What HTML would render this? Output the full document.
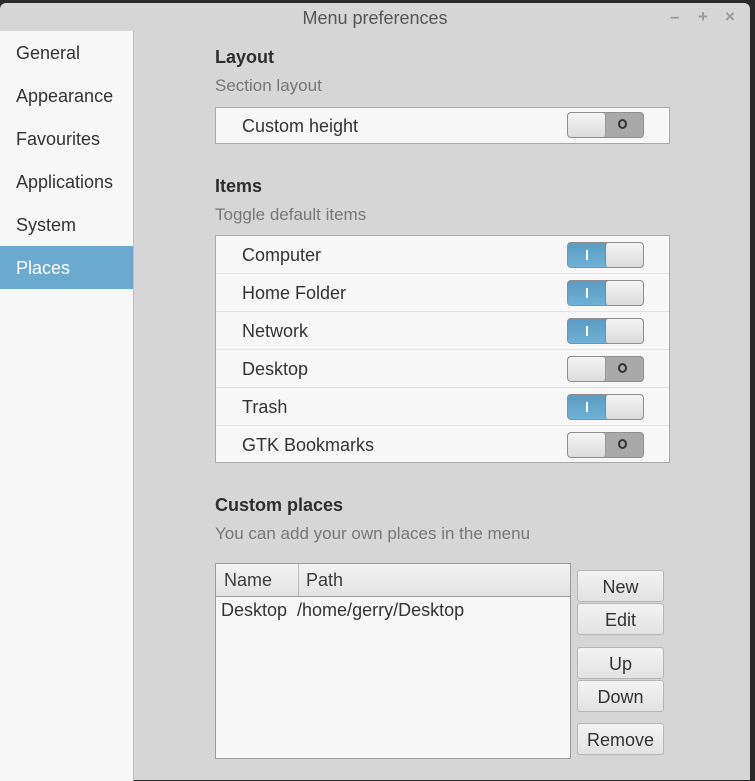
<!DOCTYPE html>
<html><head><style>
*{box-sizing:border-box;margin:0;padding:0}
body{width:755px;height:780px;background:#2a2a2a;font-family:"Liberation Sans",sans-serif;color:#3c3c3c;position:relative;overflow:hidden}
#win{position:absolute;left:0;top:3px;width:750px;height:777px;background:#d6d6d6;border-radius:6px 6px 0 0}
#title{position:absolute;left:0;top:0;width:750px;height:28px;text-align:center;font-size:18px;line-height:30px;color:#555}
.ctl{position:absolute;top:4px;font-size:17px;color:#999;font-weight:bold}
#side{position:absolute;left:0;top:28px;width:134px;height:750px;background:#f7f7f7;border-right:1px solid #bbb}
.si{height:43px;line-height:44px;padding-left:16px;font-size:18px;color:#333}
.si.sel{background:#6ba9cf;color:#fff}
.abs{position:absolute}
h3{position:absolute;left:215px;font-size:18px;font-weight:bold;color:#2e2e2e}
.sub{position:absolute;left:215px;font-size:17px;color:#777}
.box{position:absolute;left:215px;width:455px;background:#f7f7f7;border:1px solid #a8a8a8}
.row{height:38px;line-height:38px;padding-left:26px;font-size:18px;color:#333;border-bottom:1px solid #e2e2e2;position:relative}
.row:last-child{border-bottom:none}
.sw{position:absolute;left:351px;top:6px;width:77px;height:26px;border:1px solid #8e8e8e;border-radius:4px;overflow:hidden;background:#a9a9a9}
.sw .k{position:absolute;top:0;width:38px;height:24px;background:linear-gradient(#f4f4f4,#dcdcdc);border-radius:3px}
.sw.off .k{left:0;border-right:1px solid #999}
.sw.off .o{position:absolute;left:50px;top:6px;width:9px;height:10px;border:2px solid #333;border-radius:50%}
.sw.on{background:linear-gradient(#5c9cc4,#6eb0d6)}
.sw.on .k{right:0;border-left:1px solid #888}
.sw.on .i{position:absolute;left:18px;top:7px;width:2px;height:10px;background:#fff}
.btn{position:absolute;left:577px;width:87px;height:32px;border:1px solid #b5b5b5;border-radius:3px;background:linear-gradient(#f3f3f3,#e2e2e2);text-align:center;line-height:32px;font-size:18px;color:#333}
</style></head><body>
<div id="win">
<div id="title">Menu preferences</div>
<div class="ctl" style="left:670px">–</div><div class="ctl" style="left:698px">+</div><div class="ctl" style="left:725px">×</div>
<div id="side">
<div class="si">General</div><div class="si">Appearance</div><div class="si">Favourites</div><div class="si">Applications</div><div class="si">System</div><div class="si sel">Places</div>
</div>
</div>
<h3 style="top:47px">Layout</h3>
<div class="sub" style="top:76px">Section layout</div>
<div class="box" style="top:107px;height:37px"><div class="row" style="height:35px;line-height:36px">Custom height<div class="sw off" style="top:4px"><div class="k"></div><div class="o"></div></div></div></div>
<h3 style="top:176px">Items</h3>
<div class="sub" style="top:205px">Toggle default items</div>
<div class="box" style="top:235px;height:228px">
<div class="row">Computer<div class="sw on"><div class="i"></div><div class="k"></div></div></div>
<div class="row">Home Folder<div class="sw on"><div class="i"></div><div class="k"></div></div></div>
<div class="row">Network<div class="sw on"><div class="i"></div><div class="k"></div></div></div>
<div class="row">Desktop<div class="sw off"><div class="k"></div><div class="o"></div></div></div>
<div class="row">Trash<div class="sw on"><div class="i"></div><div class="k"></div></div></div>
<div class="row">GTK Bookmarks<div class="sw off"><div class="k"></div><div class="o"></div></div></div>
</div>
<h3 style="top:495px">Custom places</h3>
<div class="sub" style="top:524px">You can add your own places in the menu</div>
<div class="abs" style="left:215px;top:563px;width:356px;height:196px;background:#f7f7f7;border:1px solid #999">
<div style="height:33px;background:linear-gradient(#f4f4f4,#e2e2e2);border-bottom:1px solid #999;font-size:18px;line-height:33px;position:relative">
<span class="abs" style="left:8px">Name</span><span class="abs" style="left:82px;top:0;width:1px;height:32px;background:#bbb"></span><span class="abs" style="left:90px">Path</span></div>
<div style="font-size:18px;padding:3px 0 0 5px;color:#333">Desktop&nbsp;&nbsp;/home/gerry/Desktop</div>
</div>
<div class="btn" style="top:570px">New</div>
<div class="btn" style="top:603px">Edit</div>
<div class="btn" style="top:647px">Up</div>
<div class="btn" style="top:680px">Down</div>
<div class="btn" style="top:723px">Remove</div>
</body></html>
